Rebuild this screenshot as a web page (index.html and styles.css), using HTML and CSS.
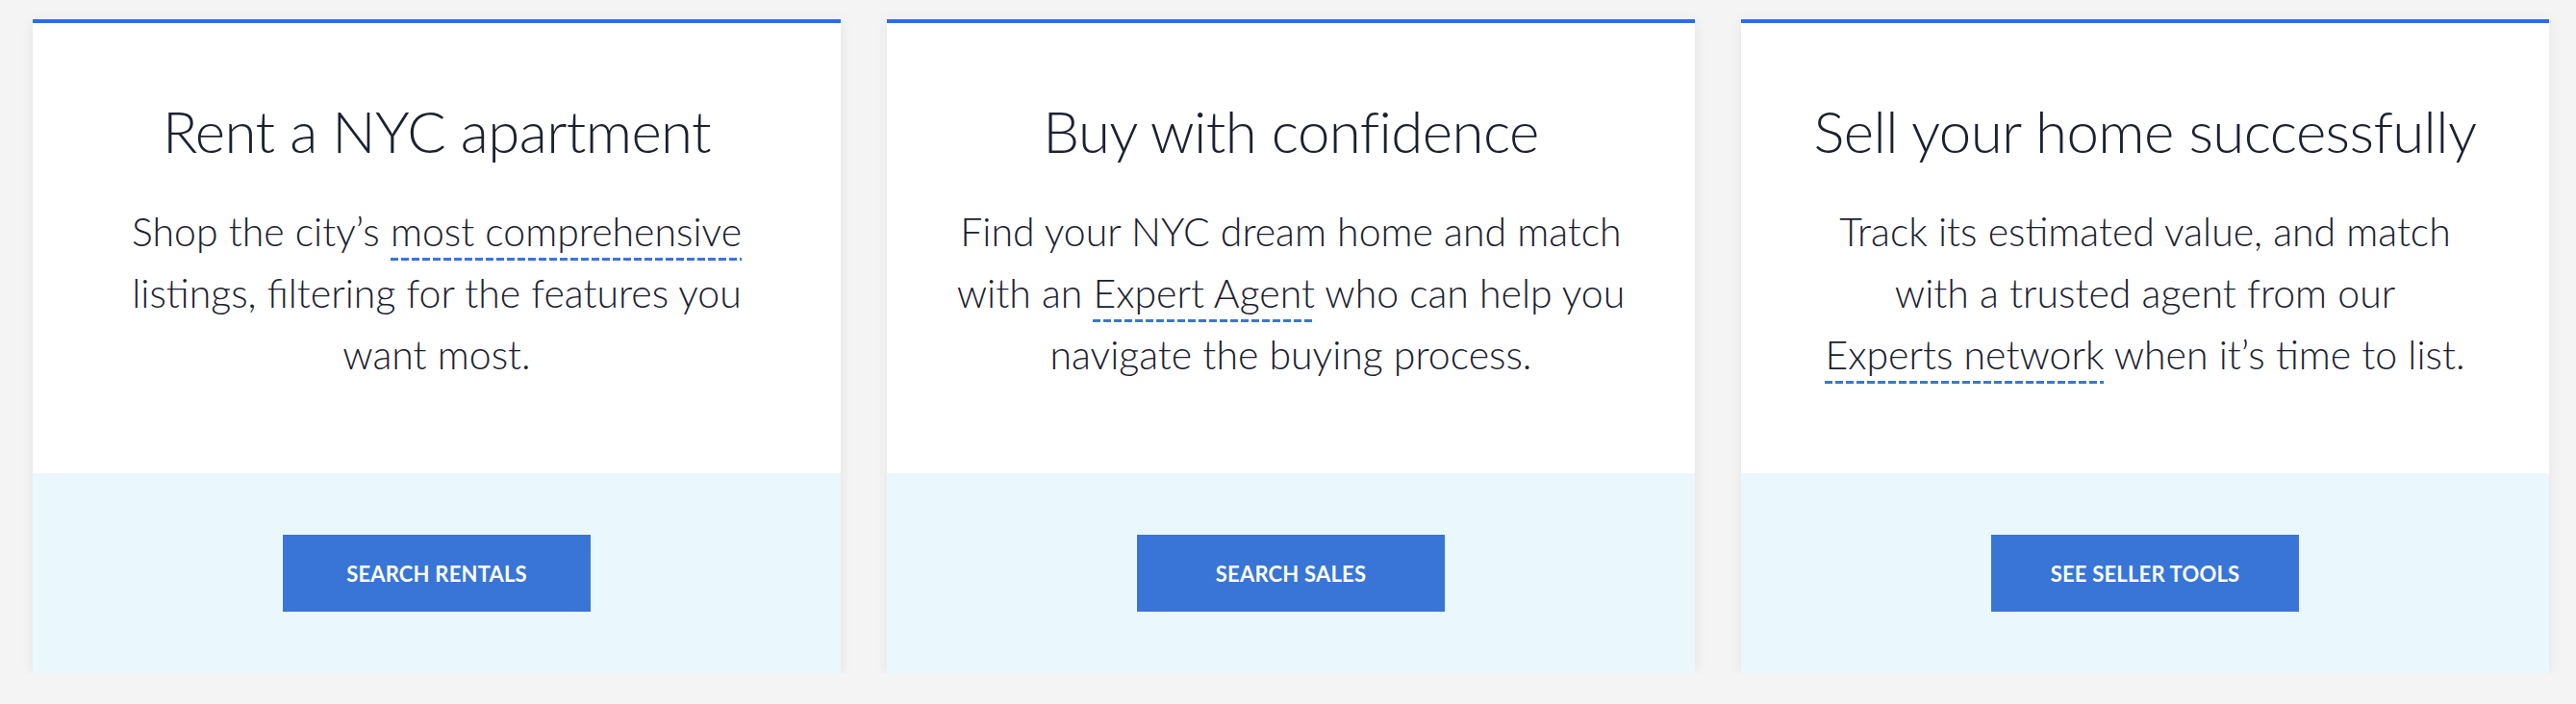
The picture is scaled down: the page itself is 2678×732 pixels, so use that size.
FILE: index.html
```html
<!DOCTYPE html>
<html lang="en">
<head>
<meta charset="utf-8">
<title>StreetEasy – Rent, Buy, Sell</title>
<link rel="stylesheet" href="styles.css">
</head>
<body>
<main class="cards">
  <section class="card">
    <div class="card-body">
      <h2 class="card-title">Rent a NYC apartment</h2>
      <p class="card-text">Shop the city’s <a class="dotted" href="#">most comprehensive</a><br>listings, filtering for the features you<br>want most.</p>
    </div>
    <div class="card-foot"><a class="btn" href="#">Search Rentals</a></div>
  </section>
  <section class="card">
    <div class="card-body">
      <h2 class="card-title">Buy with confidence</h2>
      <p class="card-text">Find your NYC dream home and match<br>with an <a class="dotted" href="#">Expert Agent</a> who can help you<br>navigate the buying process.</p>
    </div>
    <div class="card-foot"><a class="btn" href="#">Search Sales</a></div>
  </section>
  <section class="card">
    <div class="card-body">
      <h2 class="card-title">Sell your home successfully</h2>
      <p class="card-text">Track its estimated value, and match<br>with a trusted agent from our<br><a class="dotted" href="#">Experts network</a> when it’s time to list.</p>
    </div>
    <div class="card-foot"><a class="btn" href="#">See Seller Tools</a></div>
  </section>
</main>
</body>
</html>
```
FILE: styles.css
```css
html, body {
  margin: 0;
  padding: 0;
  background: #f4f4f4;
}
body {
  font-family: "Lato", "Liberation Sans", sans-serif;
  color: #1b2130;
}
.cards {
  display: grid;
  grid-template-columns: repeat(3, 840px);
  column-gap: 48px;
  padding: 20px 0 0 34px;
}
.card {
  display: flex;
  flex-direction: column;
  height: 680px;
  box-sizing: border-box;
  border-top: 4px solid #2f6bf2;
  background: #ffffff;
  box-shadow: 0 2px 14px rgba(0, 0, 0, 0.07);
}
.card-body {
  flex: 1;
  padding: 76px 20px 0;
  text-align: center;
}
.card-title {
  margin: 0;
  font-size: 60px;
  line-height: 72px;
  font-weight: 300;
  letter-spacing: -0.6px;
  color: #1b2130;
}
.card-text {
  margin: 37px 0 0;
  font-size: 41px;
  line-height: 64px;
  font-weight: 300;
  color: #1b2130;
}
.dotted {
  color: inherit;
  text-decoration: none;
  white-space: nowrap;
  padding-bottom: 6px;
  background-image: repeating-linear-gradient(to right, #3a75d8 0 8px, transparent 8px 11px);
  background-size: 100% 3px;
  background-repeat: no-repeat;
  background-position: left bottom;
}
.card-foot {
  height: 208px;
  background: #eaf8fd;
  display: flex;
  align-items: center;
  justify-content: center;
}
.btn {
  width: 320px;
  height: 80px;
  display: flex;
  align-items: center;
  justify-content: center;
  background: #3875d7;
  color: #ffffff;
  text-decoration: none;
  text-transform: uppercase;
  font-weight: 700;
  font-size: 22px;
  letter-spacing: 0.2px;
}
```
